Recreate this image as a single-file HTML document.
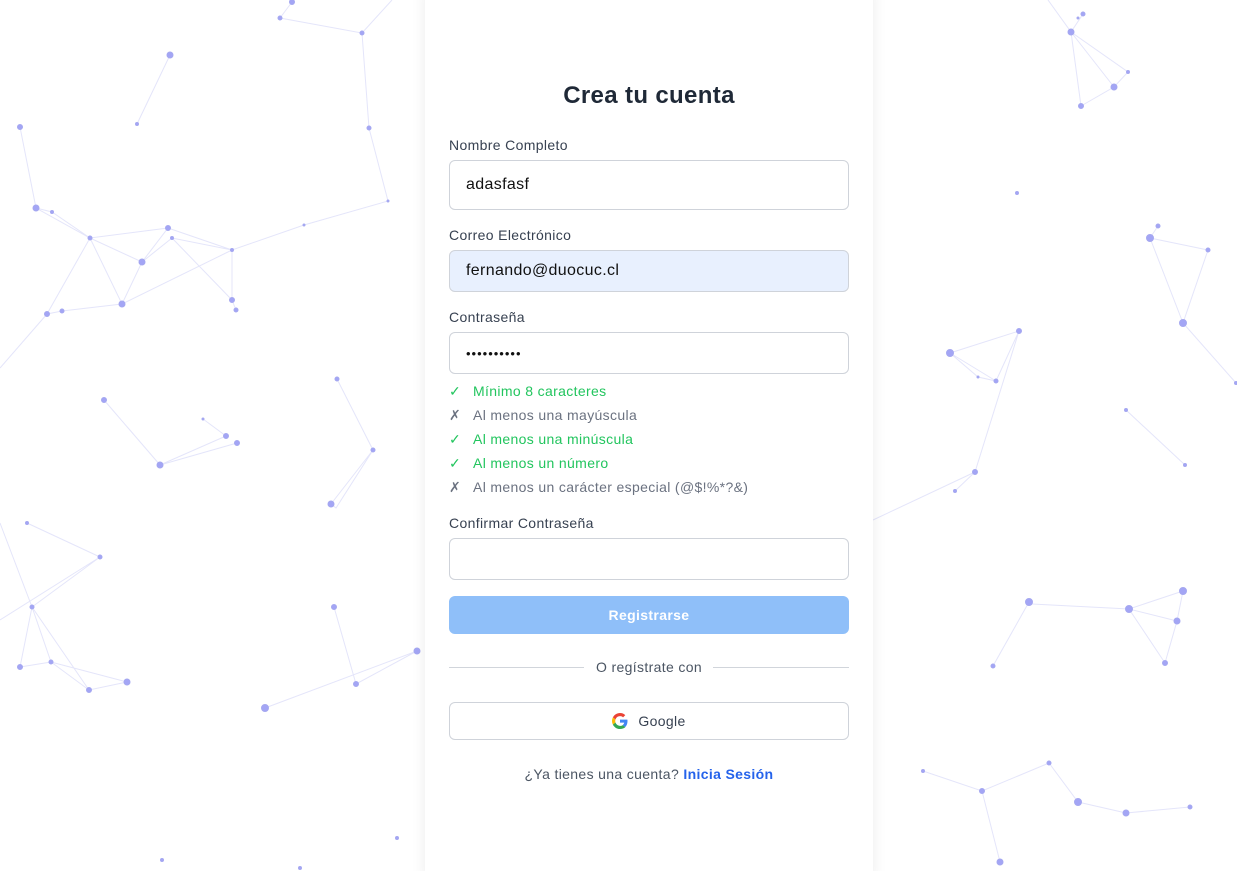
<!DOCTYPE html>
<html><head><meta charset="utf-8"><style>
*{box-sizing:border-box;margin:0;padding:0}
html,body{width:1237px;height:871px;overflow:hidden}
body{background:#fff;font-family:"Liberation Sans",sans-serif;position:relative;letter-spacing:.35px}
svg.bg{position:absolute;left:0;top:0}
.card{position:absolute;left:425px;top:-10px;width:448px;height:890px;background:#fff;box-shadow:0 0 14px rgba(0,0,0,.08)}
h1{position:absolute;left:0;width:448px;top:90px;text-align:center;font-size:24px;font-weight:bold;color:#1f2937}
.lbl{position:absolute;left:24px;font-size:14px;color:#374151}
.in{position:absolute;left:24px;width:400px;border:1px solid #cfd3da;border-radius:6px;background:#fff;font-size:16px;color:#111;padding-left:16px;display:flex;align-items:center}
.req{position:absolute;left:24px;font-size:14px}
.req span{display:inline-block;width:24px}
.g{color:#22c55e}.x{color:#6b7280}
</style></head><body>
<svg class="bg" width="1237" height="871" stroke="#a5a8f0" stroke-width="1" fill="#a3a5f5">
<g stroke-opacity=".3" fill="none">
<path d="M292 2L280 18L362 33L369 128L388 201M362 33L392 0M170 55L137 124M20 127L36 208L90 238L142 262L168 228L232 250L232 300L236 310M36 208L52 212L90 238L168 228M90 238L122 304L142 262L172 238L232 250L304 225L388 201M122 304L62 311L47 314L0 368M90 238L47 314M172 238L232 300M122 304L232 250M337 379L373 450L331 504L336 508L373 450M104 400L160 465L226 436L203 419M160 465L237 443M27 523L100 557L32 607L20 667L51 662L127 682L89 690L51 662L32 607L0 523M32 607L89 690M334 607L356 684L417 651M265 708L417 651M0 620L100 557"/>
<path d="M1048 0L1071 32L1081 106L1114 87L1128 72L1071 32L1083 14M1071 32L1114 87M1158 226L1150 238L1208 250L1183 323L1236 383M1150 238L1183 323M1019 331L950 353L978 377L996 381L1019 331L975 472L955 491M950 353L996 381M1126 410L1185 465M1029 602L993 666M1032 604L1129 609L1183 591L1177 621L1165 663L1129 609L1177 621M1183 591L1129 609M923 771L982 791L1049 763L1078 802L1126 813L1190 807M982 791L1000 862M1049 763L1078 802M873 520L975 472"/>
</g>
<g>
<circle cx="292" cy="2" r="2.5"/><circle cx="280" cy="18" r="2"/><circle cx="362" cy="33" r="2"/><circle cx="170" cy="55" r="3"/><circle cx="137" cy="124" r="1.5"/><circle cx="20" cy="127" r="2.5"/><circle cx="369" cy="128" r="2"/><circle cx="388" cy="201" r="1"/><circle cx="36" cy="208" r="3"/><circle cx="52" cy="212" r="1.5"/><circle cx="304" cy="225" r="1"/><circle cx="90" cy="238" r="2"/><circle cx="168" cy="228" r="2.5"/><circle cx="172" cy="238" r="1.5"/><circle cx="142" cy="262" r="3"/><circle cx="232" cy="250" r="1.5"/><circle cx="122" cy="304" r="3"/><circle cx="232" cy="300" r="2.5"/><circle cx="236" cy="310" r="2"/><circle cx="62" cy="311" r="2"/><circle cx="47" cy="314" r="2.5"/><circle cx="337" cy="379" r="2"/><circle cx="104" cy="400" r="2.5"/><circle cx="203" cy="419" r="1"/><circle cx="226" cy="436" r="2.5"/><circle cx="237" cy="443" r="2.5"/><circle cx="373" cy="450" r="2"/><circle cx="160" cy="465" r="3"/><circle cx="331" cy="504" r="3"/><circle cx="27" cy="523" r="1.5"/><circle cx="100" cy="557" r="2"/><circle cx="32" cy="607" r="2"/><circle cx="334" cy="607" r="2.5"/><circle cx="417" cy="651" r="3"/><circle cx="20" cy="667" r="2.5"/><circle cx="51" cy="662" r="2"/><circle cx="127" cy="682" r="3"/><circle cx="89" cy="690" r="2.5"/><circle cx="356" cy="684" r="2.5"/><circle cx="265" cy="708" r="3.5"/><circle cx="397" cy="838" r="1.5"/><circle cx="162" cy="860" r="1.5"/><circle cx="300" cy="868" r="1.5"/>
<circle cx="1083" cy="14" r="2"/><circle cx="1078" cy="18" r="1"/><circle cx="1071" cy="32" r="3"/><circle cx="1128" cy="72" r="1.5"/><circle cx="1114" cy="87" r="3"/><circle cx="1081" cy="106" r="2.5"/><circle cx="1017" cy="193" r="1.5"/><circle cx="1158" cy="226" r="2"/><circle cx="1150" cy="238" r="3.5"/><circle cx="1208" cy="250" r="2"/><circle cx="1183" cy="323" r="3.5"/><circle cx="1019" cy="331" r="2.5"/><circle cx="950" cy="353" r="3.5"/><circle cx="978" cy="377" r="1"/><circle cx="996" cy="381" r="2"/><circle cx="1236" cy="383" r="1.5"/><circle cx="1126" cy="410" r="1.5"/><circle cx="1185" cy="465" r="1.5"/><circle cx="975" cy="472" r="2.5"/><circle cx="955" cy="491" r="1.5"/><circle cx="1029" cy="602" r="3.5"/><circle cx="1129" cy="609" r="3.5"/><circle cx="1183" cy="591" r="3.5"/><circle cx="1177" cy="621" r="3"/><circle cx="1165" cy="663" r="2.5"/><circle cx="993" cy="666" r="2"/><circle cx="923" cy="771" r="1.5"/><circle cx="1049" cy="763" r="2"/><circle cx="982" cy="791" r="2.5"/><circle cx="1078" cy="802" r="3.5"/><circle cx="1126" cy="813" r="3"/><circle cx="1190" cy="807" r="2"/><circle cx="1000" cy="862" r="3"/>
</g></svg>
<div class="card">
<h1 style="top:92px">Crea tu cuenta</h1>
<div class="lbl" style="top:147px">Nombre Completo</div>
<div class="in" style="top:170px;height:50px">adasfasf</div>
<div class="lbl" style="top:237px">Correo Electrónico</div>
<div class="in" style="top:260px;height:42px;background:#e8f0fe">fernando@duocuc.cl</div>
<div class="lbl" style="top:319px">Contraseña</div>
<div class="in" style="top:342px;height:42px;font-size:13px;letter-spacing:1px">••••••••••</div>
<div class="req g" style="top:393px"><span>✓</span>Mínimo 8 caracteres</div>
<div class="req x" style="top:417px"><span>✗</span>Al menos una mayúscula</div>
<div class="req g" style="top:441px"><span>✓</span>Al menos una minúscula</div>
<div class="req g" style="top:465px"><span>✓</span>Al menos un número</div>
<div class="req x" style="top:489px"><span>✗</span>Al menos un carácter especial (@$!%*?&amp;)</div>
<div class="lbl" style="top:525px">Confirmar Contraseña</div>
<div class="in" style="top:548px;height:42px"></div>
<div style="position:absolute;left:24px;top:606px;width:400px;height:38px;border-radius:6px;background:#8fbff9;color:#fff;font-weight:bold;font-size:14px;display:flex;align-items:center;justify-content:center">Registrarse</div>
<div style="position:absolute;left:24px;top:677px;width:135px;border-top:1px solid #d1d5db"></div>
<div style="position:absolute;left:288px;top:677px;width:136px;border-top:1px solid #d1d5db"></div>
<div style="position:absolute;left:0;width:448px;top:669px;text-align:center;font-size:14px;color:#4b5563">O regístrate con</div>
<div style="position:absolute;left:24px;top:712px;width:400px;height:38px;border:1px solid #cfd3da;border-radius:6px;display:flex;align-items:center;justify-content:center;font-size:14px;color:#374151">
<svg width="16" height="16" viewBox="0 0 48 48" style="margin-right:10px"><path fill="#EA4335" d="M24 9.5c3.5 0 6.6 1.2 9.1 3.6l6.8-6.8C35.8 2.4 30.3 0 24 0 14.6 0 6.6 5.4 2.7 13.3l7.9 6.1C12.5 13.6 17.8 9.5 24 9.5z"/><path fill="#4285F4" d="M46.5 24.5c0-1.6-.1-3.1-.4-4.5H24v9h12.7c-.6 3-2.3 5.5-4.8 7.2l7.7 6c4.5-4.2 6.9-10.4 6.9-17.7z"/><path fill="#FBBC05" d="M10.5 28.6A14.5 14.5 0 0 1 10.5 19.4l-7.9-6.1A24 24 0 0 0 2.7 34.7l7.8-6.1z"/><path fill="#34A853" d="M24 48c6.5 0 11.9-2.1 15.9-5.8l-7.7-6c-2.2 1.5-5 2.3-8.2 2.3-6.2 0-11.5-4.1-13.4-9.9l-7.9 6.1C6.6 42.6 14.6 48 24 48z"/></svg>Google</div>
<div style="position:absolute;left:0;width:448px;top:776px;text-align:center;font-size:14px;color:#4b5563">¿Ya tienes una cuenta? <b style="color:#2563eb">Inicia Sesión</b></div>
</div>
</body></html>
